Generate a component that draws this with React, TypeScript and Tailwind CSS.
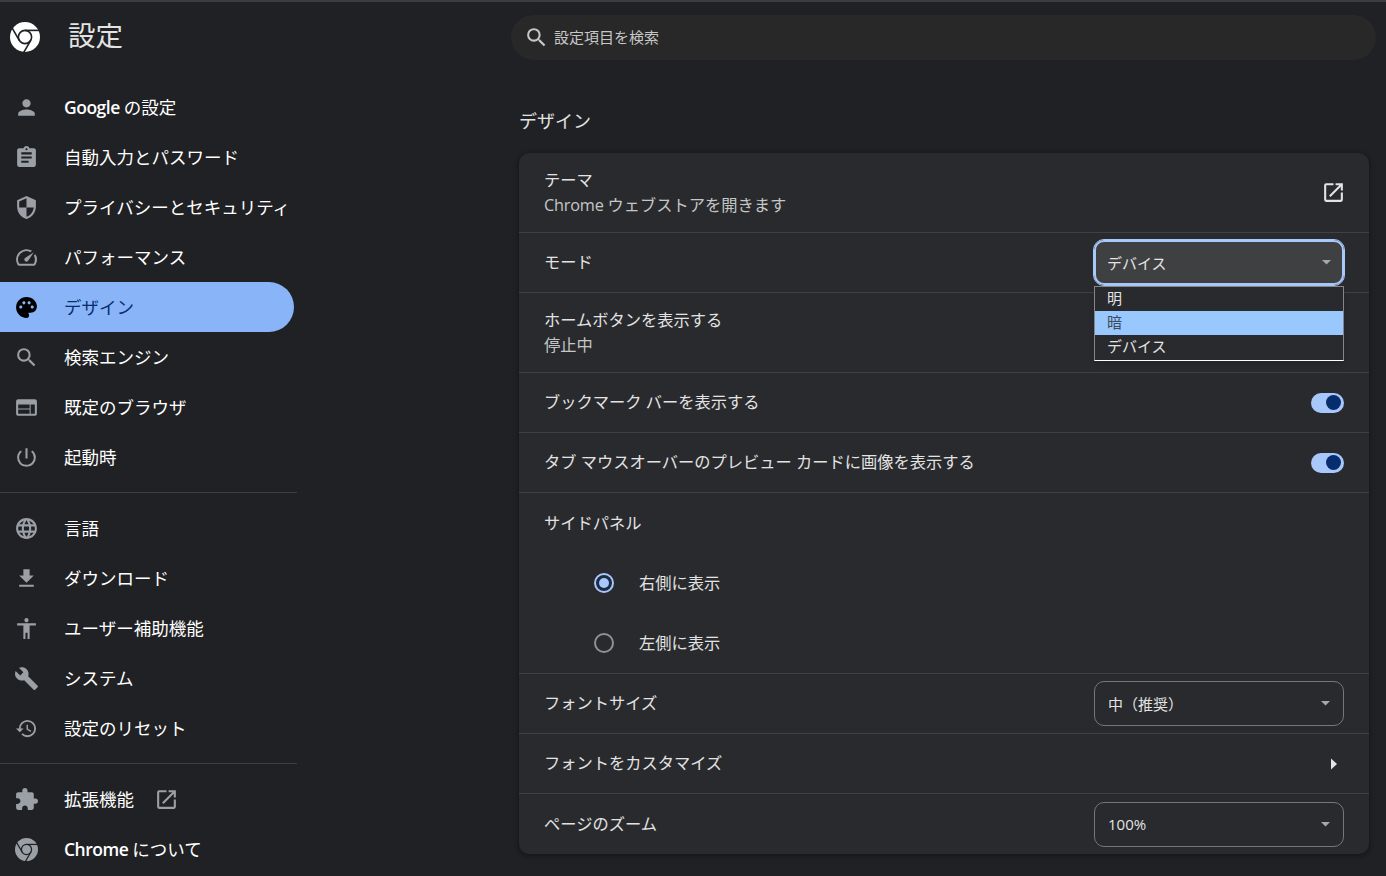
import { useState } from "react";
import type { ReactNode } from "react";
import {
  MdAccessibility,
  MdAssignment,
  MdBuild,
  MdExtension,
  MdFileDownload,
  MdHistory,
  MdLanguage,
  MdOpenInNew,
  MdPalette,
  MdPerson,
  MdPowerSettingsNew,
  MdSearch,
  MdSecurity,
  MdSpeed,
  MdWeb,
} from "react-icons/md";

function ChromeIcon({ size = 25 }: { size?: number }) {
  return (
    <svg width={size} height={size} viewBox="0 0 24 24" fill="none">
      <circle cx="12" cy="12" r="12" fill="currentColor" />
      <g stroke="#202124" strokeWidth="1.3">
        <circle cx="12" cy="12" r="5.3" />
        <path d="M12 6.7h12" />
        <path d="M12 6.7h12" transform="rotate(120 12 12)" />
        <path d="M12 6.7h12" transform="rotate(240 12 12)" />
      </g>
    </svg>
  );
}

const navGroups = [
  [
    { id: "google", latin: "Google", label: "の設定", icon: <MdPerson size={25} /> },
    { id: "autofill", label: "自動入力とパスワード", icon: <MdAssignment size={25} /> },
    { id: "privacy", label: "プライバシーとセキュリティ", icon: <MdSecurity size={25} /> },
    { id: "performance", label: "パフォーマンス", icon: <MdSpeed size={25} /> },
    { id: "appearance", label: "デザイン", icon: <MdPalette size={25} /> },
    { id: "search", label: "検索エンジン", icon: <MdSearch size={25} /> },
    { id: "browser", label: "既定のブラウザ", icon: <MdWeb size={25} /> },
    { id: "startup", label: "起動時", icon: <MdPowerSettingsNew size={25} /> },
  ],
  [
    { id: "languages", label: "言語", icon: <MdLanguage size={25} /> },
    { id: "downloads", label: "ダウンロード", icon: <MdFileDownload size={25} /> },
    { id: "a11y", label: "ユーザー補助機能", icon: <MdAccessibility size={25} /> },
    { id: "system", label: "システム", icon: <MdBuild size={25} /> },
    { id: "reset", label: "設定のリセット", icon: <MdHistory size={23} /> },
  ],
  [
    { id: "extensions", label: "拡張機能", icon: <MdExtension size={25} />, external: true },
    { id: "about", latin: "Chrome", label: "について", icon: <ChromeIcon size={23} /> },
  ],
];

function Row({ label, sub, children }: { label: string; sub?: ReactNode; children?: ReactNode }) {
  return (
    <div className={`flex items-center justify-between pl-[25px] pr-[25px] ${sub ? "h-20" : "h-[60px]"}`}>
      <div className="leading-[25px]">
        <div>{label}</div>
        {sub && <div className="text-[#c4c7c5]">{sub}</div>}
      </div>
      {children}
    </div>
  );
}

function Select({ value, open, children }: { value: string; open?: boolean; children?: ReactNode }) {
  return (
    <div className="relative">
      <button
        className={`flex h-[45px] w-[250px] items-center justify-between rounded-[10px] pl-[13px] pr-[12px] text-[15px] ${
          open ? "bg-[#3f4041] ring-2 ring-inset ring-[#a8c7fa] outline outline-[#a8c7fa]" : "border border-[#757775]"
        }`}
      >
        <span className="pt-px">{value}</span>
        <svg width="9" height="5" viewBox="0 0 9 5" className="mr-px">
          <path d="M0 0h9L4.500 4.500z" fill="#a5a8ab" />
        </svg>
      </button>
      {children}
    </div>
  );
}

function Toggle() {
  return (
    <button className="flex h-5 w-[33px] items-center justify-end rounded-full bg-[#a8c7fa] pr-[3px]">
      <span className="size-[15px] rounded-full bg-[#062e6f]" />
    </button>
  );
}

function Radio({ label, checked, onSelect }: { label: string; checked: boolean; onSelect: () => void }) {
  return (
    <div className="flex h-[60px] items-center pl-[75px]" onClick={onSelect}>
      <span
        className={`flex size-5 items-center justify-center rounded-full border-2 ${
          checked ? "border-[#a8c7fa] bg-[#1d2b43]" : "border-[#8e918f]"
        }`}
      >
        {checked && <span className="size-[10px] rounded-full bg-[#a8c7fa]" />}
      </span>
      <span className="ml-[25px] pt-px">{label}</span>
    </div>
  );
}

export default function App() {
  const [side, setSide] = useState("right");
  const current = "appearance";

  return (
    <div className="flex h-[876px] w-[1386px] overflow-hidden border-t-2 border-[#3c3d41] bg-[#202124] font-['Open_Sans','Noto_Sans_CJK_JP',sans-serif] text-[#e3e3e3]">
      <aside className="w-[511px] shrink-0">
        <div className="flex h-20 items-start pl-[10px] pt-5 text-white">
          <ChromeIcon size={30} />
          <h1 className="ml-7 -mt-0.5 text-[27.5px] leading-[32px] text-[#e3e3e3]">設定</h1>
        </div>
        <nav className="text-[17.5px]">
          {navGroups.map((group, i) => (
            <div key={i} className={i > 0 ? "mt-2.5 w-[297px] border-t border-[#3c4043] pt-2.5" : ""}>
              {group.map((item) => (
                <a
                  key={item.id}
                  className={`flex h-[50px] w-[294px] items-center ${
                    item.id === current ? "rounded-r-full bg-[#8ab4f8] text-[#062e6f]" : "text-white"
                  }`}
                >
                  <span
                    className={`ml-[14px] flex size-[25px] items-center justify-center ${
                      item.id === current ? "text-black" : "text-[#9aa0a6]"
                    }`}
                  >
                    {item.icon}
                  </span>
                  <span className="ml-[25px] whitespace-nowrap">
                    {item.latin && <span className="font-semibold tracking-[-0.5px]">{item.latin} </span>}
                    {item.label}
                  </span>
                  {item.external && <MdOpenInNew size={25} className="ml-5 text-[#9aa0a6]" />}
                </a>
              ))}
            </div>
          ))}
        </nav>
      </aside>

      <main className="w-[875px] pt-[13px]">
        <div className="flex h-[45px] w-[865px] items-center rounded-full bg-[#282828] pl-[13px] text-[#c7c7c7]">
          <MdSearch size={25} />
          <span className="ml-[5px] text-[15px]">設定項目を検索</span>
        </div>

        <section className="ml-2 w-[850px] text-[16.25px]">
          <h2 className="mt-12 h-[45px] text-[18px] leading-[27px]">デザイン</h2>
          <div className="divide-y divide-[#3f4145] rounded-[10px] bg-[#292a2d] shadow-[0_1px_4px_1px_rgba(0,0,0,0.35)]">
            <Row
              label="テーマ"
              sub={
                <>
                  <span className="tracking-[-0.2px]">Chrome </span>ウェブストアを開きます
                </>
              }
            >
              <MdOpenInNew size={25} className="-mr-0.5" />
            </Row>
            <Row label="モード">
              <Select value="デバイス" open>
                <ul className="absolute left-0 top-[46px] z-10 h-[75px] w-[250px] border border-[#858585] border-b-white bg-[#292a2d] text-[15px] leading-[24px] shadow-md *:h-6 *:pl-3">
                  <li className="leading-[22px]">明</li>
                  <li className="bg-[#99c8ff] leading-[22px] text-[#3b4a5c]">暗</li>
                  <li className="leading-[22px]">デバイス</li>
                </ul>
              </Select>
            </Row>
            <Row label="ホームボタンを表示する" sub="停止中" />
            <Row label="ブックマーク バーを表示する">
              <Toggle />
            </Row>
            <Row label="タブ マウスオーバーのプレビュー カードに画像を表示する">
              <Toggle />
            </Row>
            <div>
              <Row label="サイドパネル" />
              <Radio label="右側に表示" checked={side === "right"} onSelect={() => setSide("right")} />
              <Radio label="左側に表示" checked={side === "left"} onSelect={() => setSide("left")} />
            </div>
            <Row label="フォントサイズ">
              <Select value="中（推奨）" />
            </Row>
            <Row label="フォントをカスタマイズ">
              <svg width="6" height="12" viewBox="0 0 6 12" className="mr-[7px]">
                <path d="M0 0.500v11L6 6z" fill="#e3e3e3" />
              </svg>
            </Row>
            <Row label="ページのズーム">
              <Select value="100%" />
            </Row>
          </div>
        </section>
      </main>
    </div>
  );
}
